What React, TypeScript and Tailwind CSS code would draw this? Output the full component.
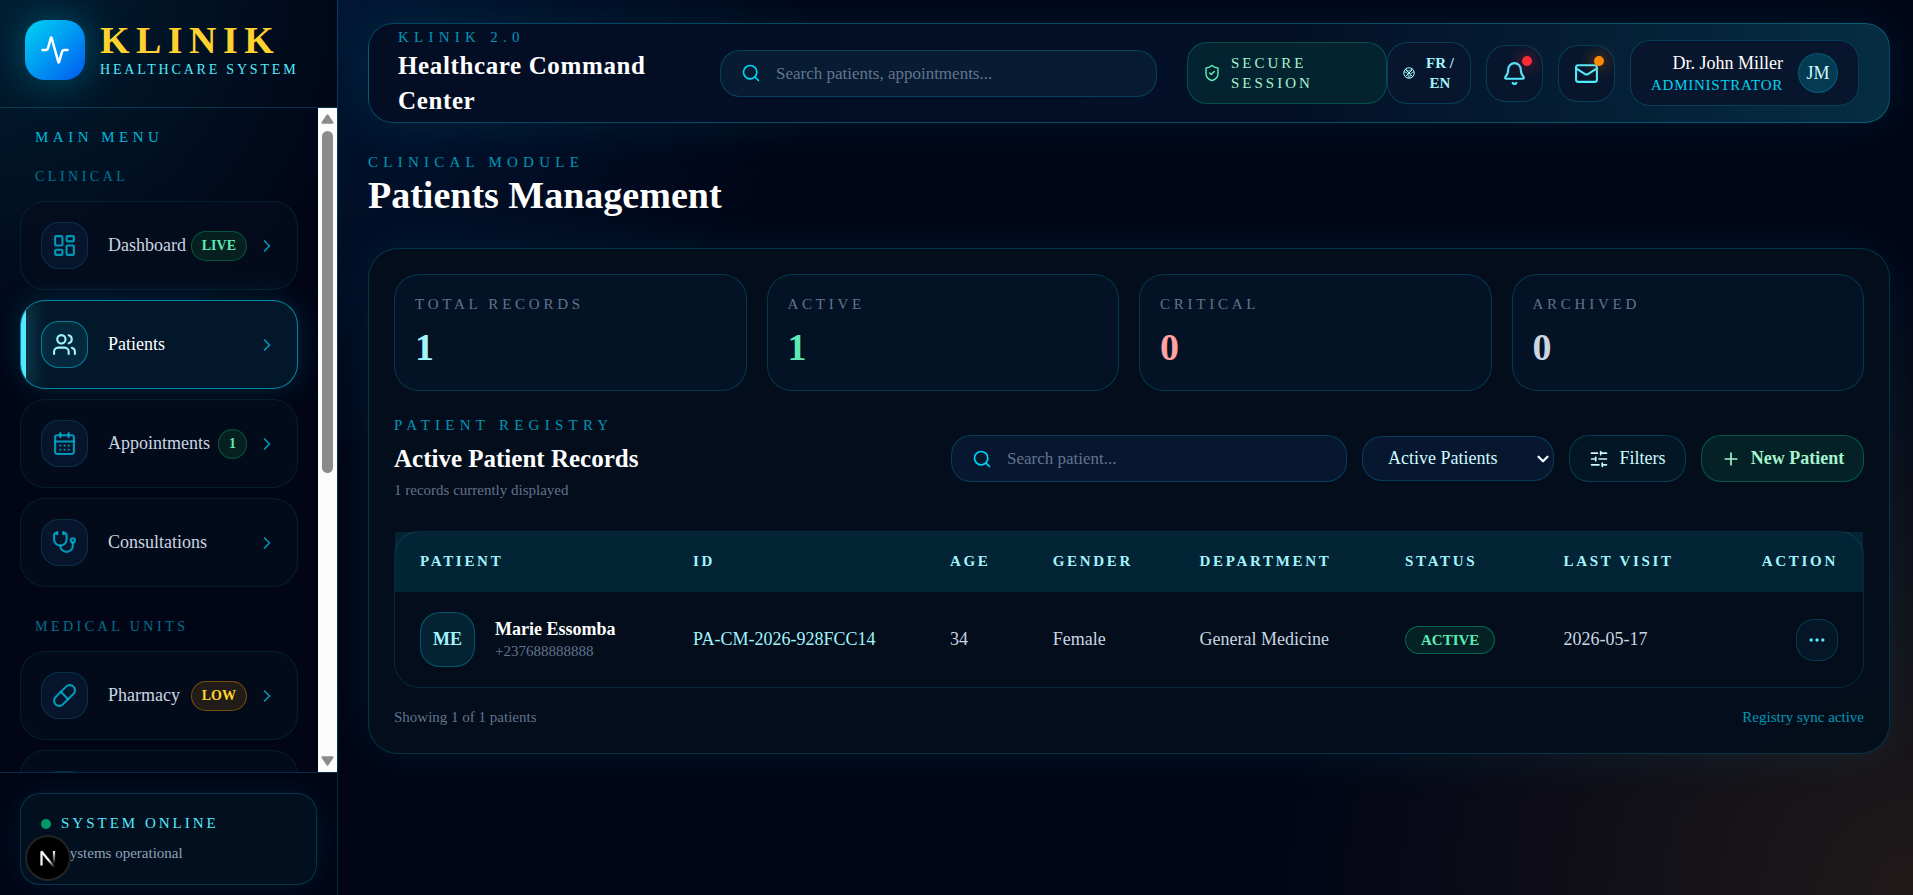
import React from "react";
import {
  Activity,
  Bell,
  CalendarDays,
  ChevronDown,
  ChevronRight,
  Ellipsis,
  LayoutDashboard,
  Mail,
  Pill,
  Plus,
  Search,
  ShieldCheck,
  SlidersHorizontal,
  Stethoscope,
  Users,
  type LucideIcon,
} from "lucide-react";
import { clsx } from "clsx";

type Tone = "green" | "amber";

type NavItem = {
  label: string;
  icon: LucideIcon;
  active?: boolean;
  badge?: { text: string; tone: Tone };
};

const clinical: NavItem[] = [
  { label: "Dashboard", icon: LayoutDashboard, badge: { text: "LIVE", tone: "green" } },
  { label: "Patients", icon: Users, active: true },
  { label: "Appointments", icon: CalendarDays, badge: { text: "1", tone: "green" } },
  { label: "Consultations", icon: Stethoscope },
];

const medical: NavItem[] = [{ label: "Pharmacy", icon: Pill, badge: { text: "LOW", tone: "amber" } }];

const stats = [
  { label: "TOTAL RECORDS", value: 1, color: "text-cyan-200" },
  { label: "ACTIVE", value: 1, color: "text-emerald-300" },
  { label: "CRITICAL", value: 0, color: "text-red-300" },
  { label: "ARCHIVED", value: 0, color: "text-slate-300" },
];

const columns = [
  { label: "PATIENT", className: "w-[18.6%] text-left" },
  { label: "ID", className: "w-[17.5%] text-left" },
  { label: "AGE", className: "w-[7%] text-left" },
  { label: "GENDER", className: "w-[10%] text-left" },
  { label: "DEPARTMENT", className: "w-[14%] text-left" },
  { label: "STATUS", className: "w-[10.8%] text-left" },
  { label: "LAST VISIT", className: "w-[12%] text-left" },
  { label: "ACTION", className: "text-right" },
];

function NavLink({ item }: { item: NavItem }) {
  const Icon = item.icon;
  return (
    <a
      href="#"
      aria-current={item.active ? "page" : undefined}
      className={clsx(
        "relative flex shrink-0 items-center rounded-[25px] border p-5",
        item.active
          ? "border-cyan-500/70 bg-[#02182a] shadow-[0_0_30px_rgba(0,211,242,0.16)]"
          : "border-cyan-400/10 bg-[#040d1d]/80",
      )}
    >
      {item.active && (
        <span className="absolute inset-0 overflow-hidden rounded-[24px]">
          <span className="block h-full w-[5px] bg-cyan-300 shadow-[0_0_20px_rgba(83,234,253,0.7)]" />
        </span>
      )}
      <span
        className={clsx(
          "flex size-[47px] shrink-0 items-center justify-center rounded-[18px] border",
          item.active
            ? "border-cyan-400/50 bg-[#05293c] text-cyan-200"
            : "border-cyan-400/15 bg-[#06152b] text-cyan-500/80",
        )}
      >
        <Icon size={25} />
      </span>
      <span
        className={clsx(
          "ml-5 min-w-0 flex-1 text-[18px] leading-[25px]",
          item.active ? "text-white" : "text-slate-300",
        )}
      >
        {item.label}
      </span>
      {item.badge && (
        <span
          className={clsx(
            "rounded-full border px-[10px] py-1 text-[14px] leading-5 font-bold",
            item.badge.tone === "green"
              ? "border-emerald-400/30 bg-[#05201f] text-emerald-300"
              : "border-amber-500/40 bg-[#211c17] text-[#ffd230]",
          )}
        >
          {item.badge.text}
        </span>
      )}
      <ChevronRight size={20} className="ml-[10px] shrink-0 text-cyan-500/80" />
    </a>
  );
}

function Sidebar() {
  return (
    <aside className="relative flex h-full w-[338px] shrink-0 flex-col border-r border-cyan-400/20 bg-[radial-gradient(circle_at_top_left,rgba(0,190,230,0.13),transparent_380px)]">
      <div className="flex items-center gap-[15px] border-b border-cyan-400/20 px-[25px] pt-5 pb-[27px]">
        <div className="flex size-[60px] items-center justify-center rounded-[20px] bg-linear-to-br from-[#00d3f2] to-[#0055ee] text-white shadow-[0_0_40px_rgba(0,211,242,0.35)]">
          <Activity size={30} />
        </div>
        <div>
          <div className="text-[38px] leading-10 font-bold tracking-[0.17em] text-[#ffd230]">KLINIK</div>
          <div className="text-[14px] leading-5 tracking-[0.2em] whitespace-nowrap text-cyan-300">
            HEALTHCARE SYSTEM
          </div>
        </div>
      </div>

      <div className="flex min-h-0 flex-1">
        <nav
          aria-label="Main menu"
          className="flex min-w-0 flex-1 flex-col overflow-x-hidden overflow-y-auto px-5 pt-5 [scrollbar-width:none]"
        >
          <h2 className="mb-[19px] px-[15px] pb-[2px] text-[15px] leading-[18px] tracking-[0.3em] text-cyan-500">
            MAIN MENU
          </h2>
          <h3 className="mb-[14px] px-[15px] text-[14px] leading-5 tracking-[0.25em] text-cyan-500/60">CLINICAL</h3>
          <div className="flex flex-col gap-[10px]">
            {clinical.map((item) => (
              <NavLink key={item.label} item={item} />
            ))}
          </div>
          <h3 className="mt-[30px] mb-[14px] px-[15px] text-[14px] leading-5 tracking-[0.25em] text-cyan-500/60">
            MEDICAL UNITS
          </h3>
          <div className="flex flex-col gap-[10px]">
            {medical.map((item) => (
              <NavLink key={item.label} item={item} />
            ))}
            <div className="flex rounded-[25px] border border-cyan-400/10 bg-[#040d1d]/80 p-5">
              <span className="size-[47px] rounded-[18px] border border-cyan-400/15 bg-[#06152b]" />
            </div>
          </div>
        </nav>
        <div className="flex w-[19px] shrink-0 flex-col items-center gap-[7px] bg-[#fcfcfc] py-[6px]" aria-hidden="true">
          <svg width="13" height="10" viewBox="0 0 13 10" fill="#8b8b8b">
            <path d="M5.6.8a1.2 1.2 0 0 1 1.8 0l4.9 7.3c.5.8.1 1.6-.8 1.6h-10c-.9 0-1.3-.8-.8-1.6z" />
          </svg>
          <div className="h-[342px] w-[11px] rounded-full bg-[#8b8b8b]" />
          <svg width="13" height="10" viewBox="0 0 13 10" fill="#8b8b8b" className="mt-auto">
            <path d="M5.6 9.2a1.2 1.2 0 0 0 1.8 0l4.9-7.3c.5-.8.1-1.6-.8-1.6h-10C.6.3.2 1.1.7 1.9z" />
          </svg>
        </div>
      </div>

      <div className="border-t border-cyan-400/20 px-5 pt-5 pb-[10px]">
        <div className="rounded-[20px] border border-cyan-400/20 bg-[#020f1e] p-5 shadow-[0_0_30px_rgba(0,211,242,0.09)]">
          <div className="flex items-center gap-[10px]">
            <span className="size-[10px] rounded-full bg-[#00996b]" />
            <span className="pb-[2px] text-[15px] leading-[18px] tracking-[0.2em] text-cyan-300">SYSTEM ONLINE</span>
          </div>
          <p className="mt-[10px] pb-[2px] text-[15px] leading-[18px] text-slate-400">All systems operational</p>
        </div>
      </div>

      <button
        type="button"
        aria-label="Open developer tools"
        className="absolute bottom-[14px] left-[25px] flex size-[46px] items-center justify-center rounded-full border-2 border-[#222426] bg-black"
      >
        <svg width="42" height="42" viewBox="0 0 42 42" fill="none" strokeWidth="2.2">
          <defs>
            <linearGradient id="stem" x1="0" y1="14" x2="0" y2="27" gradientUnits="userSpaceOnUse">
              <stop stopColor="#fff" />
              <stop offset="1" stopColor="#fff" stopOpacity="0" />
            </linearGradient>
            <linearGradient id="slash" x1="22" y1="22" x2="28" y2="30" gradientUnits="userSpaceOnUse">
              <stop stopColor="#fff" />
              <stop offset="1" stopColor="#fff" stopOpacity="0" />
            </linearGradient>
          </defs>
          <path d="M14.500 28.500v-14" stroke="#fff" />
          <path d="M14.300 14.300l13.500 16.500" stroke="url(#slash)" />
          <path d="M27 14v13" stroke="url(#stem)" />
        </svg>
      </button>
    </aside>
  );
}

function IconButton({ label, icon: Icon, dot }: { label: string; icon: LucideIcon; dot: string }) {
  return (
    <button
      type="button"
      aria-label={label}
      className="relative flex size-[57px] shrink-0 items-center justify-center rounded-[20px] border border-cyan-400/20 bg-[#07162d] text-cyan-300"
    >
      <Icon size={25} />
      <span className={clsx("absolute top-[10px] right-[10px] size-[10px] rounded-full", dot)} />
    </button>
  );
}

function TopBar() {
  return (
    <header className="flex h-[100px] items-center rounded-[25px] border border-cyan-400/30 bg-linear-to-r from-[#030d24] via-[#031027] via-60% to-[#062d42] pr-[30px] pl-[29px] shadow-[0_0_50px_rgba(0,211,242,0.1)]">
      <div className="w-[292px] shrink-0">
        <p className="pb-[2px] text-[15px] leading-[18px] tracking-[0.35em] text-cyan-500/80">KLINIK 2.0</p>
        <p className="text-[25px] leading-[35px] font-bold tracking-[0.025em] text-white">
          Healthcare Command Center
        </p>
      </div>
      <label className="ml-[30px] flex h-[47px] min-w-0 flex-1 items-center gap-[15px] rounded-[20px] border border-cyan-400/20 bg-[#071b33] px-5">
        <Search size={20} className="shrink-0 text-[#00d3f2]" />
        <input
          type="search"
          aria-label="Search patients and appointments"
          placeholder="Search patients, appointments..."
          className="min-w-0 flex-1 bg-transparent text-[17px] leading-[25px] text-white outline-none placeholder:text-slate-500"
        />
      </label>
      <div className="ml-[30px] flex w-[200px] shrink-0 items-center gap-[10px] rounded-[20px] border border-emerald-400/25 bg-[#042330] px-[15px] py-[10px]">
        <ShieldCheck size={18} className="shrink-0 text-emerald-300" />
        <span className="text-[15px] leading-5 tracking-[0.2em] text-emerald-200">SECURE SESSION</span>
      </div>
      <button
        type="button"
        className="flex w-[84px] shrink-0 items-center gap-[10px] rounded-[20px] border border-cyan-400/20 bg-[#07162d] px-[15px] py-[10px] text-cyan-200"
      >
        <svg
          width="12"
          height="12"
          viewBox="0 0 24 24"
          fill="none"
          stroke="currentColor"
          strokeWidth="2"
          className="shrink-0"
        >
          <circle cx="12" cy="12" r="10.500" />
          <path d="M4.500 4.500l15 15M4.500 19.500L19.500 4.500M6 3.500c2 5 7 7 12 0M2 10c6-1 10 5 8 12M22 10c-5 0-9 5-8 12" />
        </svg>
        <span className="text-[15px] leading-5 font-bold">FR / EN</span>
      </button>
      <div className="ml-[15px] flex shrink-0 items-center gap-[15px]">
        <IconButton label="Notifications" icon={Bell} dot="bg-[#fb2c36] shadow-[0_0_15px_rgba(251,44,54,0.8)]" />
        <IconButton label="Messages" icon={Mail} dot="bg-[#ff8904] shadow-[0_0_15px_rgba(255,137,4,0.8)]" />
        <div className="flex items-center gap-[15px] rounded-[20px] border border-cyan-400/20 bg-[#07162d] px-5 py-[10px]">
          <div className="text-right">
            <p className="text-[18px] leading-6 text-white">Dr. John Miller</p>
            <p className="text-[15px] leading-5 tracking-[0.05em] text-[#00d3f2]">ADMINISTRATOR</p>
          </div>
          <div className="flex size-10 items-center justify-center rounded-full border border-cyan-400/20 bg-[#053b52] text-[18px] text-cyan-100">
            JM
          </div>
        </div>
      </div>
    </header>
  );
}

function Registry() {
  return (
    <section className="rounded-[30px] border border-cyan-400/20 bg-[#030e1b]/95 p-[25px] shadow-[0_0_50px_rgba(0,211,242,0.09)]">
      <div className="grid grid-cols-4 gap-5">
        {stats.map((stat) => (
          <div key={stat.label} className="rounded-[25px] border border-cyan-400/20 bg-[#041225] p-5">
            <p className="pb-[2px] text-[15px] leading-[18px] tracking-[0.25em] text-slate-500">{stat.label}</p>
            <p className={clsx("mt-[10px] text-[38px] leading-[45px] font-bold", stat.color)}>{stat.value}</p>
          </div>
        ))}
      </div>

      <div className="mt-[25px] flex items-center justify-between">
        <div>
          <p className="pb-[2px] text-[15px] leading-[18px] tracking-[0.35em] text-cyan-500/80">PATIENT REGISTRY</p>
          <h2 className="mt-[5px] text-[25px] leading-[35px] font-bold text-white">Active Patient Records</h2>
          <p className="mt-[5px] pb-[2px] text-[15px] leading-[18px] text-slate-500">1 records currently displayed</p>
        </div>
        <div className="flex items-center gap-[15px] text-[18px] leading-[25px]">
          <label className="flex h-[47px] w-[396px] items-center gap-[15px] rounded-[20px] border border-cyan-400/20 bg-[#071730] px-5">
            <Search size={20} className="shrink-0 text-[#00d3f2]" />
            <input
              type="search"
              aria-label="Search patient"
              placeholder="Search patient..."
              className="min-w-0 flex-1 bg-transparent text-[17px] text-white outline-none placeholder:text-slate-500"
            />
          </label>
          <div className="relative">
            <select
              aria-label="Patient status"
              className="h-[45px] w-[192px] appearance-none rounded-[20px] border border-cyan-400/20 bg-[#071730] pr-[30px] pl-[25px] text-cyan-100"
            >
              <option>Active Patients</option>
              <option>Archived Patients</option>
            </select>
            <ChevronDown
              size={18}
              strokeWidth={3}
              className="pointer-events-none absolute top-[14px] right-[2px] text-cyan-50"
            />
          </div>
          <button
            type="button"
            className="flex h-[47px] w-[117px] items-center justify-center gap-[10px] rounded-[20px] border border-cyan-400/20 bg-[#031625] text-cyan-100"
          >
            <SlidersHorizontal size={20} />
            Filters
          </button>
          <button
            type="button"
            className="flex h-[47px] w-[163px] items-center justify-center gap-[10px] rounded-[20px] border border-emerald-400/30 bg-[#042126] font-bold text-emerald-200"
          >
            <Plus size={20} />
            New Patient
          </button>
        </div>
      </div>

      <div className="mt-[30px] rounded-[25px] border border-cyan-400/15">
        <table className="w-full table-fixed border-collapse">
          <thead className="bg-cyan-400/12">
            <tr>
              {columns.map((col) => (
                <th
                  key={col.label}
                  className={clsx(
                    "px-[25px] pt-5 pb-[22px] text-[15px] leading-[18px] font-bold tracking-[0.18em] text-cyan-200",
                    col.className,
                  )}
                >
                  {col.label}
                </th>
              ))}
            </tr>
          </thead>
          <tbody>
            <tr className="text-[18px] leading-[25px] text-slate-300">
              <td className="px-[25px] py-5">
                <div className="flex items-center gap-5">
                  <span className="flex size-[55px] shrink-0 items-center justify-center rounded-[20px] border border-cyan-400/30 bg-[#052233] font-bold text-cyan-200">
                    ME
                  </span>
                  <div className="whitespace-nowrap">
                    <p className="font-bold text-white">Marie Essomba</p>
                    <p className="pb-[2px] text-[15px] leading-[18px] text-slate-500">+237688888888</p>
                  </div>
                </div>
              </td>
              <td className="px-[25px] whitespace-nowrap text-cyan-200">PA-CM-2026-928FCC14</td>
              <td className="px-[25px]">34</td>
              <td className="px-[25px]">Female</td>
              <td className="px-[25px] whitespace-nowrap">General Medicine</td>
              <td className="px-[25px]">
                <span className="inline-block rounded-full border border-emerald-400/40 bg-[#042124] px-[15px] py-[3px] align-middle text-[15px] leading-5 font-bold text-emerald-300">
                  ACTIVE
                </span>
              </td>
              <td className="px-[25px] whitespace-nowrap">2026-05-17</td>
              <td className="px-[25px]">
                <button
                  type="button"
                  aria-label="Patient actions"
                  className="ml-auto flex size-[42px] items-center justify-center rounded-[18px] border border-cyan-400/20 bg-[#041628] text-cyan-300"
                >
                  <Ellipsis size={20} />
                </button>
              </td>
            </tr>
          </tbody>
        </table>
      </div>

      <div className="mt-5 flex justify-between pb-[2px] text-[15px] leading-[18px]">
        <span className="text-slate-500">Showing 1 of 1 patients</span>
        <span className="text-cyan-500/80">Registry sync active</span>
      </div>
    </section>
  );
}

export default function App() {
  return (
    <div className="flex h-screen overflow-hidden bg-[#010516] font-['Liberation_Serif','Times_New_Roman',serif]">
      <Sidebar />
      <main className="min-w-0 flex-1 overflow-hidden bg-[radial-gradient(circle_at_top_left,rgba(0,110,200,0.17),transparent_480px),radial-gradient(circle_at_bottom_right,rgba(255,170,50,0.12),transparent_640px)] pt-[23px] pr-[23px] pl-[30px]">
        <TopBar />
        <div className="py-[30px]">
          <p className="pb-[2px] text-[15px] leading-[18px] tracking-[0.35em] text-cyan-500/80">CLINICAL MODULE</p>
          <h1 className="text-[38px] leading-[45px] font-bold text-white">Patients Management</h1>
        </div>
        <Registry />
      </main>
    </div>
  );
}
